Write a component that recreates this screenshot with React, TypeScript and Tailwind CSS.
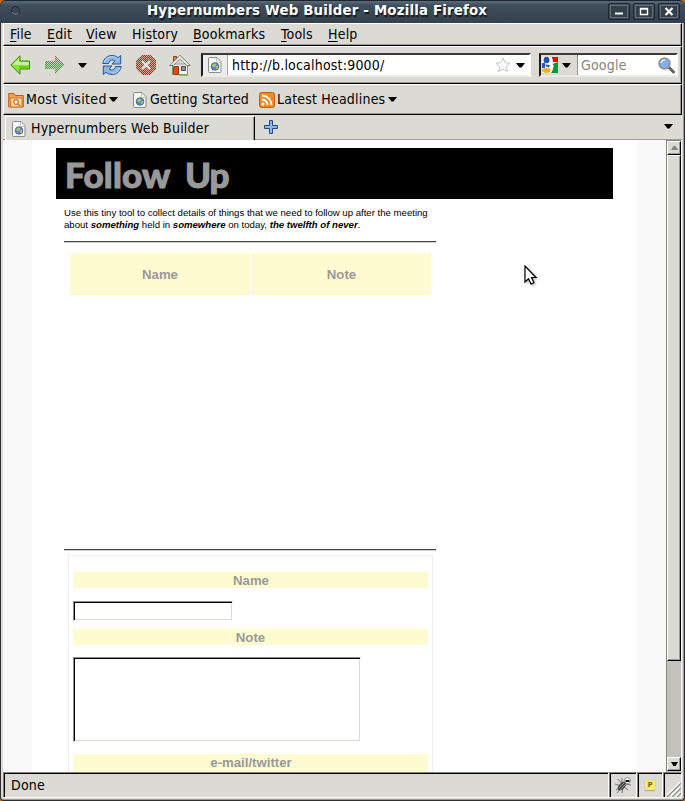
import React from 'react';

const ui = "font-['DejaVu_Sans_Condensed','DejaVu_Sans',sans-serif]";
const uiText = 'text-[14px] tracking-[0.200px] [font-stretch:condensed]';

function PageIcon() {
  return (
    <svg width="14" height="16" viewBox="0 0 14 16" className="block shrink-0">
      <path d="M1.5.5h7.5l4 4v10a1 1 0 0 1-1 1h-10.500a1 1 0 0 1-1-1v-13a1 1 0 0 1 1-1z" fill="#f6f6f5" stroke="#8b8d88" />
      <path d="M8.500 1v4.500h4.500z" fill="#fff" stroke="#babdb6" strokeWidth=".8" />
      <circle cx="7" cy="9.500" r="3.800" fill="#5b86c0" stroke="#3d6296" strokeWidth=".8" />
      <path d="M4 8.500l2-2 2.500.5-1 2.500-2 .8zM8 9.500l2-.8v2.300l-2 1.200z" fill="#b4c36a" />
    </svg>
  );
}

function Caret({ className = '' }: { className?: string }) {
  return (
    <svg width="9" height="5" viewBox="0 0 9 5" className={'block shrink-0 ' + className}>
      <path d="M0 0h9L5.500 4.500h-2z" fill="#000" />
    </svg>
  );
}

function MenuItem({ pre = '', hot, rest, w }: { pre?: string; hot: string; rest: string; w: string }) {
  return (
    <span className={'shrink-0 whitespace-pre ' + w}>
      {pre}
      <span className="underline decoration-1 underline-offset-2">{hot}</span>
      {rest}
    </span>
  );
}

function WinButton({ children }: { children: React.ReactNode }) {
  return (
    <div className="h-[17px] w-[22px] rounded-[2px] border border-[#1e262e] p-px">
      <div className="flex h-full w-full items-center justify-center border border-[#62707d] bg-[#33404b]">
        <svg width="10" height="9" viewBox="0 0 10 9" fill="none" className="block">{children}</svg>
      </div>
    </div>
  );
}

function TitleBar() {
  return (
    <div className="flex h-[23px] shrink-0 items-start rounded-t-[6px] border-t border-[#1c232a] bg-linear-to-b from-[#5b6c7c] via-[#3f4e5b] via-20% to-[#34414d] pl-[10px] pr-[5px]">
      <svg width="11" height="11" viewBox="0 0 11 11" className="mt-[4px] block shrink-0">
        <circle cx="5.500" cy="5.500" r="4" fill="#3b4853" stroke="#202930" />
        <path d="M2 7a4 4 0 0 0 6.500 1" fill="none" stroke="#7e8b97" />
      </svg>
      <div className="ml-[126px] w-[352px] whitespace-nowrap font-['DejaVu_Sans',sans-serif] text-[13.333px] leading-[20px] font-bold tracking-[0.190px] text-white [text-shadow:1px_2px_1px_#111820]">
        Hypernumbers Web Builder - Mozilla Firefox
      </div>
      <div className="ml-auto mt-[2px] flex gap-[3px]">
        <WinButton><path d="M1 6.500h8" stroke="#fff" strokeWidth="2" /></WinButton>
        <WinButton><path d="M1.500 1.500h7v6h-7zM1 2h8" stroke="#fff" strokeWidth="1.400" /></WinButton>
        <WinButton><path d="M1.500 1l7 7M8.500 1l-7 7" stroke="#fff" strokeWidth="2.200" /></WinButton>
      </div>
    </div>
  );
}

const bar = 'flex shrink-0 items-center border-t border-l border-t-white border-l-white border-r border-r-black border-b border-b-black shadow-[inset_-1px_-1px_0_#9b9a95]';

function Toolbar() {
  return (
    <div className={bar + ' h-[38px] pr-[3px] pl-[6px]'}>
      <svg width="21" height="20" viewBox="0 0 21 20" className="block shrink-0">
        <path d="M.8 10L10 .8V6h9.500v8H10v5.200z" fill="#8ae234" stroke="#3c8a0a" strokeLinejoin="round" />
        <path d="M2.500 9.700L9 3.200V7h9.500v3z" fill="#c8f59a" />
        <path d="M9 11h9.500v2H9z" fill="#6dcb1d" />
      </svg>
      <svg width="21" height="20" viewBox="0 0 21 20" className="ml-[13px] block shrink-0">
        <defs>
          <pattern id="green" width="2" height="2" patternUnits="userSpaceOnUse"><path d="M0 0h1v1H0zM1 1h1v1H1z" fill="#4e9a25" /></pattern>
          <pattern id="red" width="2" height="2" patternUnits="userSpaceOnUse"><path d="M0 0h1v1H0zM1 1h1v1H1z" fill="#b02a26" /></pattern>
        </defs>
        <path d="M20 10L11 1v5H1v8h10v5z" fill="#c3d8b3" shapeRendering="crispEdges" />
        <path d="M20 10L11 1v5H1v8h10v5z" fill="url(#green)" shapeRendering="crispEdges" />
      </svg>
      <Caret className="ml-[13px]" />
      <svg width="22" height="22" viewBox="0 0 22 22" className="ml-[14px] block shrink-0">
        <path d="M1.800 9.500C2.500 4.500 6.500 1.500 11 1.500c2.500 0 4.500.9 6 2.300l2.700-2.300V10h-8.700l2.900-2.900C11.500 5 8.500 5.800 7.500 9.500z" fill="#8db5e6" stroke="#2b5794" strokeLinejoin="round" />
        <path d="M20.200 12.500C19.500 17.500 15.500 20.500 11 20.500c-2.500 0-4.500-.9-6-2.300l-2.700 2.300V12H11l-2.900 2.900c2.400 2.100 5.400 1.300 6.400-2.400z" fill="#8db5e6" stroke="#2b5794" strokeLinejoin="round" />
        <path d="M3.500 8C4.500 4.500 7.500 2.800 11 2.800c2.500 0 4.300.9 5.800 2.500l1.700-1.500M18.500 14c-1 3.500-4 5.200-7.500 5.200" fill="none" stroke="#c5dcf5" />
      </svg>
      <svg width="22" height="22" viewBox="0 0 22 22" className="ml-[12px] block shrink-0">
        <path d="M7 1h8l6 6v8l-6 6H7l-6-6V7z" fill="#d9a9a4" />
        <path d="M7 1h8l6 6v8l-6 6H7l-6-6V7z" fill="url(#red)" shapeRendering="crispEdges" />
        <path d="M7 7l8 8M15 7l-8 8" stroke="#f1e7e5" strokeWidth="2.200" />
      </svg>
      <svg width="22" height="22" viewBox="0 0 22 22" className="ml-[12px] block shrink-0">
        <path d="M4.500 2.500h3v5h-3z" fill="#ef7b4e" stroke="#a3380b" />
        <path d="M3.500 10h15v10.500h-15z" fill="#fafafa" stroke="#8a8b87" />
        <path d="M11 1.200L.8 11.500h3.400L11 5l6.800 6.500h3.400z" fill="#f1f1ef" stroke="#777974" />
        <path d="M8 5v7M11 3v9M14 5v7" stroke="#c9c9c6" />
        <path d="M4.500 12.500h5v8h-5z" fill="#d9500c" stroke="#a3380b" />
        <path d="M12.500 12.500h4v4h-4z" fill="#8b8f8e" stroke="#4d504e" />
        <path d="M10 21h9" stroke="#7aa74c" strokeWidth="1.500" />
      </svg>
      <div className="ml-[10px] flex h-[24px] w-[330px] items-center border-2 border-t-[#3a3a38] border-l-[#1c1c1b] border-r-white border-b-[#eceae6] bg-white">
        <div className="flex h-full w-[25px] shrink-0 items-center justify-center border-r border-[#aaa9a4] bg-[#ececea]"><PageIcon /></div>
        <span className={'ml-[4px] ' + uiText}>http://b.localhost:9000/</span>
        <svg width="16" height="16" viewBox="0 0 16 16" className="ml-auto block"><path d="M8 1l2.100 4.700 5 .5-3.800 3.400 1.100 5L8 12l-4.400 2.600 1.100-5L.9 6.200l5-.5z" fill="#fff" stroke="#c6c6c4" /></svg>
        <Caret className="mr-[4px] ml-[5px]" />
      </div>
      <div className="ml-auto flex h-[24px] w-[139px] items-center border-2 border-t-[#3a3a38] border-l-[#1c1c1b] border-r-white border-b-[#eceae6] bg-white">
        <div className="flex h-full w-[37px] shrink-0 items-center border-r border-[#93928e] bg-[#dbdad5] pl-px">
          <svg width="16" height="16" viewBox="0 0 16 16" className="block">
            <path d="M0 0h16v16H0z" fill="#fff" />
            <path d="M9 0h7v5h-5z" fill="#e60b0b" />
            <path d="M10 7l6-2v11H9l2-5z" fill="#0a993f" />
            <path d="M0 6h3v5H0z" fill="#295fb8" />
            <ellipse cx="4.500" cy="3" rx="3" ry="3.200" fill="#1c50ad" />
            <path d="M3 7.500l5 .5-1 2.500-3-1z" fill="#295fb8" />
            <ellipse cx="4.500" cy="13.400" rx="4.300" ry="2.400" fill="#f3b10b" />
            <path d="M9 0l1 3-1 3 2 3-2 6" fill="none" stroke="#fff" strokeWidth="1.500" />
          </svg>
          <Caret className="ml-[4px]" />
        </div>
        <span className={'ml-[3px] text-[#85847f] ' + uiText}>Google</span>
        <svg width="17" height="17" viewBox="0 0 17 17" className="ml-auto mr-px block">
          <path d="M11 10.500l4.500 4.500" stroke="#626460" strokeWidth="3" strokeLinecap="round" />
          <circle cx="6.500" cy="6.500" r="5.500" fill="#83aee4" stroke="#8f928e" strokeWidth="1.500" />
          <path d="M3 6c.5-2 2-3 4-3" fill="none" stroke="#d6e7fb" strokeWidth="1.600" />
        </svg>
      </div>
    </div>
  );
}

function Bookmarks() {
  return (
    <div className={bar + ' h-[31px] pl-[4px] ' + uiText}>
      <svg width="16" height="16" viewBox="0 0 16 16" className="block shrink-0">
        <path d="M.7 15V1.500H6l1.500 2h7.800V15z" fill="#f0a25a" stroke="#c45d0b" />
        <path d="M2 6h12v9H3z" fill="#f9d3a8" stroke="#d87422" />
        <circle cx="8" cy="10" r="2.300" fill="#fff3df" stroke="#d87422" strokeWidth="1.200" />
        <path d="M9.700 11.700l2.300 2.300" stroke="#d87422" strokeWidth="1.500" />
      </svg>
      <span className="ml-[2px] w-[83px] shrink-0 whitespace-nowrap tracking-[0.350px]">Most Visited</span>
      <Caret />
      <div className="ml-[15px]"><PageIcon /></div>
      <span className="ml-[3px] w-[109px] shrink-0 whitespace-nowrap tracking-[0.100px]">Getting Started</span>
      <svg width="16" height="16" viewBox="0 0 16 16" className="block shrink-0">
        <rect x=".5" y=".5" width="15" height="15" rx="2" fill="#f08a25" stroke="#c45d0b" />
        <circle cx="4" cy="12" r="1.500" fill="#fff" />
        <path d="M3 7.500a5.500 5.500 0 0 1 5.500 5.500M3 3.500a9.500 9.500 0 0 1 9.500 9.500" fill="none" stroke="#fff" strokeWidth="1.800" />
      </svg>
      <span className="ml-[2px] w-[111px] shrink-0 whitespace-nowrap">Latest Headlines</span>
      <Caret />
    </div>
  );
}

function Tabs() {
  return (
    <div className={'flex h-[25px] shrink-0 pt-px ' + uiText}>
      <div className="w-[2px] border-b border-[#9b9a95]" />
      <div className="flex w-[250px] items-center border-t border-l border-t-white border-l-white border-r border-r-black pl-[6px] shadow-[inset_-1px_0_0_#9b9a95]">
        <PageIcon />
        <span className="ml-[5px] whitespace-nowrap">Hypernumbers Web Builder</span>
      </div>
      <div className="flex flex-1 items-center border-b border-[#9b9a95] pl-[9px] pr-[9px]">
        <svg width="14" height="14" viewBox="0 0 14 14" className="mb-[2px] block"><path d="M5.500.5h3v5h5v3h-5v5h-3v-5h-5v-3h5z" fill="#8db5e6" stroke="#204a87" /></svg>
        <Caret className="ml-auto mb-[2px]" />
      </div>
    </div>
  );
}

const knob = 'shrink-0 border border-t-white border-l-white border-r-black border-b-black bg-[#dbdad5] shadow-[inset_-1px_-1px_0_#9b9a95]';

function Scrollbar() {
  return (
    <div className="mr-px flex w-[15px] shrink-0 flex-col border-t border-l border-[#85847f] bg-[#c3c2bd]">
      <div className={knob + ' flex h-[14px] items-center justify-center'}>
        <svg width="7" height="4" viewBox="0 0 7 4"><path d="M0 4h7L4.500 0h-2z" fill="#85847f" /></svg>
      </div>
      <div className={knob + ' h-[506px]'} />
      <div className="flex-1" />
      <div className={knob + ' mb-px flex h-[14px] items-center justify-center'}>
        <svg width="7" height="4" viewBox="0 0 7 4"><path d="M0 0h7L4.500 4h-2z" fill="#000" /></svg>
      </div>
    </div>
  );
}

const label = 'shrink-0 bg-[#fffbd0] text-center text-[13.200px] font-bold text-[#999]';
const sunken = 'block border border-t-[#8e8d88] border-l-[#8e8d88] border-r-white border-b-white bg-white shadow-[inset_1px_1px_0_#000,inset_-1px_-1px_0_#dbdad5] outline-none resize-none';

function Page() {
  return (
    <div className="flex min-h-0 flex-1 justify-start overflow-hidden bg-[#f9f9f9] font-['Liberation_Sans',Arial,sans-serif]">
      <div className="ml-[29px] h-full w-[605px] overflow-hidden bg-white pl-[24px] pt-[8px]">
        <div className="flex h-[51px] w-[557px] items-start overflow-hidden bg-black pl-[9px] text-[35px] leading-[53px] font-black text-[#999] [font-family:Lato,sans-serif] [-webkit-text-stroke:1px_#999]">
          <span className="w-[120px] tracking-[0.200px]">Follow</span>
          <span className="tracking-[-1px]">Up</span>
        </div>
        <div className="ml-[8px] w-[373px]">
          <p className="mt-[8px] whitespace-nowrap text-[9.600px] leading-[12px] text-black">
            Use this tiny tool to collect details of things that we need to follow up after the meeting
            <br />
            about <b><i>something</i></b> held in <b><i>somewhere</i></b> on today, <b><i>the twelfth of never</i></b>.
          </p>
          <div className="mt-[10px] h-[2px] w-[372px] border-t border-b border-t-[#444] border-b-[#ccc]" />
          <div className="mt-[10px] ml-[6px] flex gap-px">
            <div className={label + ' h-[42px] w-[180px] leading-[43px]'}>Name</div>
            <div className={label + ' h-[42px] w-[180px] pl-px leading-[43px]'}>Note</div>
          </div>
          <div className="mt-[254px] h-[2px] w-[372px] border-t border-b border-t-[#444] border-b-[#ccc]" />
          <div className="mt-[4px] ml-[4px] h-[260px] w-[365px] border border-[#eee] px-[4px] pt-[16px]">
            <div className={label + ' h-[16px] pl-px leading-[17px]'}>Name</div>
            <input className={sunken + ' mt-[13px] h-[20px] w-[160px]'} />
            <div className={label + ' mt-[8px] h-[16px] leading-[17px]'}>Note</div>
            <textarea className={sunken + ' mt-[12px] h-[85px] w-[288px]'} />
            <div className={label + ' mt-[12px] h-[20px] pl-px leading-[18px]'}>e-mail/twitter</div>
          </div>
        </div>
      </div>
      <div className="flex-1" />
      <Scrollbar />
    </div>
  );
}

const cell = 'flex h-[25px] items-center border-t border-l border-[#85847f] border-r border-r-white shadow-[inset_1px_1px_0_#000]';

function StatusBar() {
  return (
    <div className={'flex h-[26px] shrink-0 border-b border-white ' + uiText}>
      <div className={cell + ' flex-1 pl-[7px]'}>Done</div>
      <div className={cell + ' w-[28px] justify-center'}>
        <svg width="18" height="18" viewBox="0 0 18 18">
          <g stroke="#777" strokeWidth="1"><path d="M4 3l4 5M1 8l6 2M2 14l5-3M8 17l1-5M14 14l-4-3M17 9l-6-1M8 2v5M3 17l4-5" /></g>
          <ellipse cx="8" cy="10" rx="3" ry="5.500" transform="rotate(42 8 10)" fill="#444" />
          <path d="M5 12l5-5M6 14l6-6" stroke="#aaa" strokeWidth=".8" />
          <circle cx="13.500" cy="4.500" r="3" fill="#fff" stroke="#777" strokeWidth=".8" />
          <path d="M11.500 4h4v2h-4z" fill="#111" />
        </svg>
      </div>
      <div className={cell + ' w-[26px] justify-center'}>
        <div className="flex h-[10px] w-[10px] items-center justify-center bg-[#f4e678] text-[7px] leading-none font-bold tracking-normal text-[#66601c] shadow-[0_1px_1px_#aaa]">P</div>
      </div>
      <div className={cell + ' w-[19px] items-end justify-end'}>
        <svg width="15" height="15" viewBox="0 0 15 15" className="block">
          <path d="M1 15L15 1M6 15l9-9M11 15l4-4" stroke="#8e8d88" strokeWidth="1.300" />
          <path d="M0 14L14 0M5 14l9-9M10 14l4-4" stroke="#fff" strokeWidth="1.200" />
        </svg>
      </div>
    </div>
  );
}

export default function App() {
  return (
    <div className={'relative h-[801px] w-[685px] overflow-hidden bg-[#c8681c] text-black ' + ui}>
      <div className="flex h-full flex-col overflow-hidden rounded-t-[6px] rounded-b-[4px] bg-[#2d2f31]">
        <TitleBar />
        <div className="mx-px mb-px flex min-h-0 flex-1 flex-col rounded-b-[3px] border-r border-b border-[#9b9a95] bg-[#dbdad5] pr-px pb-px pl-[2px]">
          <div className={bar + ' h-[23px] pl-[6px] ' + uiText}>
            <MenuItem w="w-[37px]" hot="F" rest="ile" />
            <MenuItem w="w-[39px]" hot="E" rest="dit" />
            <MenuItem w="w-[46px]" hot="V" rest="iew" />
            <MenuItem w="w-[61px]" pre="Hi" hot="s" rest="tory" />
            <MenuItem w="w-[88px]" hot="B" rest="ookmarks" />
            <MenuItem w="w-[47px]" hot="T" rest="ools" />
            <MenuItem w="w-[40px]" hot="H" rest="elp" />
          </div>
          <Toolbar />
          <Bookmarks />
          <Tabs />
          <Page />
          <StatusBar />
        </div>
      </div>
      <svg width="14" height="22" viewBox="0 0 14 22" className="absolute top-[265px] left-[524px] drop-shadow-[1px_1px_1px_#aaa]">
        <path d="M1 1v16l3.500-3.200L7 19l3-1.300L7.500 12.500h4.500z" fill="#fff" stroke="#000" strokeWidth="1.200" />
      </svg>
    </div>
  );
}
